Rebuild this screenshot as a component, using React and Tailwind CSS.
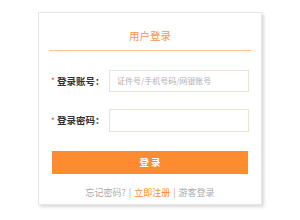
export default function App() {
    return (
        <div className="w-[300px] h-[220px] bg-white pt-[12px] pl-[38px] font-['Noto_Sans_CJK_SC','Liberation_Sans',sans-serif]">
            {/* Login card */}
            <div className="w-[224px] h-[193px] bg-white border border-[#e6e6e6] shadow-[2px_2px_3px_rgba(0,0,0,0.15)] px-[10px]">
                <div className="mt-[17px] pb-[8px] border-b border-[#fcc49c] text-center text-[10.5px] leading-[12px] text-[#f7944f]">
                    用户登录
                </div>

                <div className="mt-[19px] flex items-center">
                    <span className="w-[8px] pl-[2px] text-[8px] leading-[8px] text-[#e0252b]">*</span>
                    <span className="w-[52px] text-[9.5px] font-bold text-[#333]">登录账号：</span>
                    <div className="w-[140px] h-[22px] border border-[#e8e4cf] flex items-center pl-[7px] text-[8px] text-[#b0b0b0]">
                        证件号/手机号码/网银账号
                    </div>
                </div>

                <div className="mt-[17px] flex items-center">
                    <span className="w-[8px] pl-[2px] text-[8px] leading-[8px] text-[#e0252b]">*</span>
                    <span className="w-[52px] text-[9.5px] font-bold text-[#333]">登录密码：</span>
                    <div className="w-[140px] h-[23px] border border-[#e8e4cf]"></div>
                </div>

                <button className="mt-[19px] ml-[3px] w-[196px] h-[23px] bg-[#fd8b2f] text-white text-[9.5px] font-bold flex items-center justify-center">
                    登&nbsp;录
                </button>

                <div className="mt-[13px] text-center text-[9px] leading-[12px] text-[#aaa]">
                    忘记密码?<span className="mx-[3px]">|</span>
                    <span className="text-[#f98a2a]">立即注册</span>
                    <span className="mx-[3px]">|</span>游客登录
                </div>
            </div>
        </div>
    );
}
